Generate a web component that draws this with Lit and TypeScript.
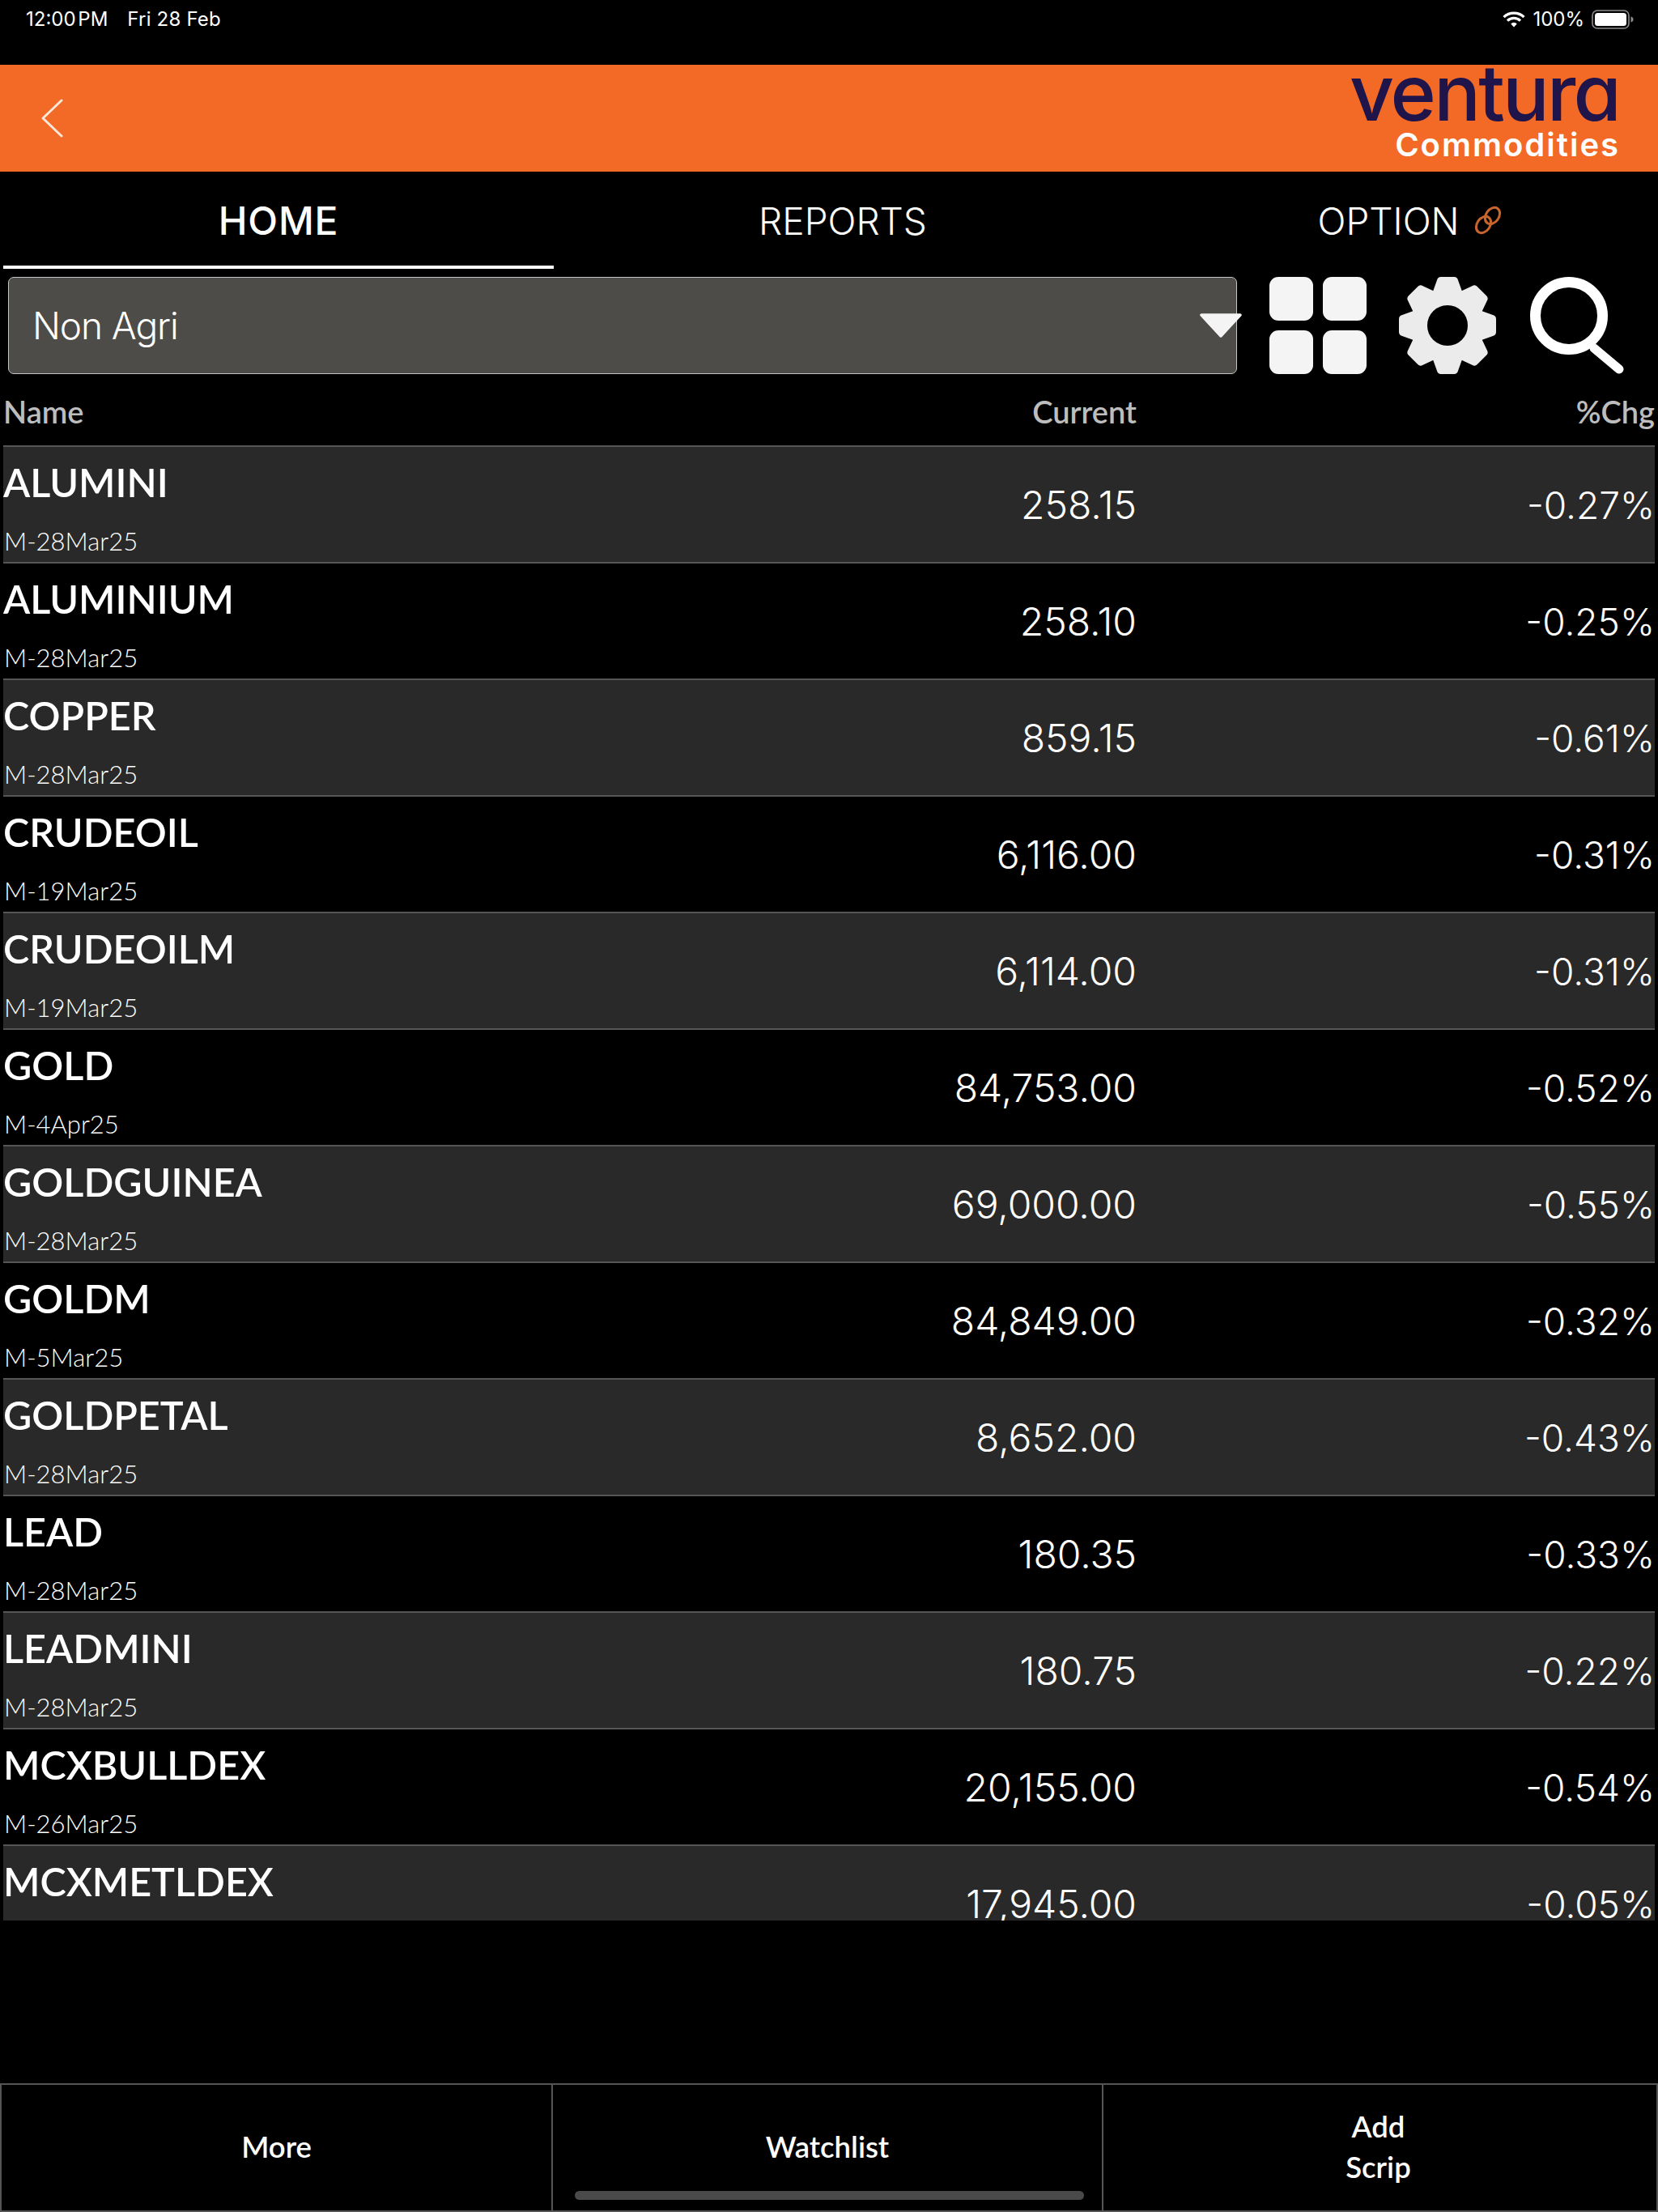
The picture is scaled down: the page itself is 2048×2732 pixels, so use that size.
import { LitElement, html, css, svg } from "lit";
import { customElement } from "lit/decorators.js";

const ROWS: [string, string, string, string][] = [
  ["ALUMINI", "M-28Mar25", "258.15", "-0.27%"],
  ["ALUMINIUM", "M-28Mar25", "258.10", "-0.25%"],
  ["COPPER", "M-28Mar25", "859.15", "-0.61%"],
  ["CRUDEOIL", "M-19Mar25", "6,116.00", "-0.31%"],
  ["CRUDEOILM", "M-19Mar25", "6,114.00", "-0.31%"],
  ["GOLD", "M-4Apr25", "84,753.00", "-0.52%"],
  ["GOLDGUINEA", "M-28Mar25", "69,000.00", "-0.55%"],
  ["GOLDM", "M-5Mar25", "84,849.00", "-0.32%"],
  ["GOLDPETAL", "M-28Mar25", "8,652.00", "-0.43%"],
  ["LEAD", "M-28Mar25", "180.35", "-0.33%"],
  ["LEADMINI", "M-28Mar25", "180.75", "-0.22%"],
  ["MCXBULLDEX", "M-26Mar25", "20,155.00", "-0.54%"],
  ["MCXMETLDEX", "", "17,945.00", "-0.05%"],
];

const TEETH = [0, 45, 90, 135, 180, 225, 270, 315];

@customElement("app-root")
export class AppRoot extends LitElement {
  static styles = css`
    :host {
      display: flex;
      flex-direction: column;
      width: 2048px;
      height: 2732px;
      background: #000;
      color: #fff;
      font-family: "Lato", "Liberation Sans", sans-serif;
      overflow: hidden;
    }
    svg { display: block; flex: none; }

    .status {
      height: 80px;
      flex: none;
      display: flex;
      align-items: flex-start;
      justify-content: space-between;
      padding: 10px 30px 0 32px;
      box-sizing: border-box;
      font-family: "Inter", "Liberation Sans", sans-serif;
      font-size: 24px;
      line-height: 28px;
    }
    .status-left { display: flex; gap: 24px; }
    .time { word-spacing: -4px; }
    .date { letter-spacing: 0.2px; }
    .status-right { display: flex; align-items: center; gap: 9px; }

    .brand {
      height: 132px;
      flex: none;
      background: #f26a25;
      display: flex;
      align-items: center;
      justify-content: space-between;
      padding: 0 48px 0 51px;
      box-sizing: border-box;
    }
    .logo {
      display: flex;
      flex-direction: column;
      align-items: flex-end;
      font-family: "Inter", "Liberation Sans", sans-serif;
    }
    .logo-main {
      color: #1f154b;
      font-size: 96px;
      font-weight: 500;
      line-height: 72px;
      letter-spacing: -2.8px;
      margin-top: -14px;
      font-feature-settings: "cv11";
    }
    .logo-sub {
      color: #fff;
      font-size: 40px;
      font-weight: 600;
      line-height: 44px;
      letter-spacing: 2px;
      margin: 7px -1px 0 0;
    }

    .tabs {
      height: 130px;
      flex: none;
      display: grid;
      grid-template-columns: 680px 714px 1fr;
      padding-left: 4px;
      box-sizing: border-box;
      font-family: "Inter", "Liberation Sans", sans-serif;
      font-size: 46px;
      font-weight: 300;
    }
    .tab {
      display: flex;
      align-items: flex-start;
      justify-content: center;
      gap: 18px;
      padding-top: 23px;
      line-height: 76px;
      box-sizing: border-box;
    }
    .tab.active {
      font-weight: 500;
      font-size: 48px;
      letter-spacing: 0.8px;
      padding-top: 23px;
      height: 120px;
      border-bottom: 4px solid #fff;
    }
    .tab.option { padding-left: 38px; }
    .tab.option svg { margin-top: 19px; }

    .tools {
      height: 120px;
      flex: none;
      display: flex;
      align-items: stretch;
      padding-left: 10px;
    }
    .select {
      position: relative;
      width: 1518px;
      box-sizing: border-box;
      background: #4d4c48;
      border: 1.5px solid #c4c4c4;
      border-radius: 7px;
      display: flex;
      align-items: center;
      padding-left: 29px;
      font-family: "Inter", "Liberation Sans", sans-serif;
      font-size: 46px;
      font-weight: 300;
      letter-spacing: -1.1px;
      margin-right: 40px;
    }
    .arrow { position: absolute; left: 1470px; top: 44px; }
    .gear { margin: 0 42px 0 40px; }

    .head, .row {
      display: grid;
      grid-template-columns: 1000px 400px 1fr;
    }
    .head {
      height: 88px;
      flex: none;
      box-sizing: border-box;
      margin: 0 4px;
      padding-top: 28px;
      color: #bdbdbd;
      font-size: 38px;
      font-weight: 600;
      line-height: 36px;
    }
    .head .r, .row .r { text-align: right; }

    .list {
      height: 1822px;
      flex: none;
      margin: 0 4px;
      overflow: hidden;
    }
    .row {
      height: 144px;
      box-sizing: border-box;
      border-top: 2px solid #555;
    }
    .row.alt { background: #292929; }
    .name {
      font-size: 48.5px;
      font-weight: 600;
      line-height: 56px;
      margin-top: 15px;
    }
    .sub {
      font-size: 31px;
      font-weight: 300;
      line-height: 38px;
      margin: 26px 0 0 1px;
    }
    .val {
      font-family: "Inter", "Liberation Sans", sans-serif;
      font-size: 48px;
      font-weight: 300;
      line-height: 144px;
    }
    .val.pct { font-size: 46px; }

    .spacer { flex: 1; }

    .bar {
      position: relative;
      height: 159px;
      flex: none;
      box-sizing: border-box;
      display: grid;
      grid-template-columns: 679px 680px 1fr;
      border: 2px solid #555;
      font-size: 36.5px;
      font-weight: 600;
      line-height: 50px;
    }
    .cell {
      display: flex;
      align-items: center;
      justify-content: center;
      text-align: center;
      padding-bottom: 4px;
      box-sizing: border-box;
    }
    .cell + .cell { border-left: 2px solid #555; }
    .cell.last { padding-right: 4px; }
    .home {
      position: absolute;
      left: 708px;
      top: 131px;
      width: 629px;
      height: 11px;
      border-radius: 6px;
      background: #4a4a4a;
    }
  `;

  private renderGear() {
    return html`<svg class="gear" width="120" height="120" viewBox="-60 -60 120 120" fill="#ebebeb">
      <circle r="35.5" fill="none" stroke="#ebebeb" stroke-width="21"></circle>
      ${TEETH.map(
        (a) => svg`<path transform="rotate(${a})" d="M-18-42-13-56Q-12-60-8-60H8Q12-60 13-56L18-42Z"></path>`
      )}
    </svg>`;
  }

  render() {
    return html`
      <div class="status">
        <div class="status-left"><span class="time">12:00 PM</span><span class="date">Fri 28 Feb</span></div>
        <div class="status-right">
          <svg width="28" height="20" viewBox="0 0 28 20" fill="none" stroke="#fff" stroke-width="3.2">
            <path d="M1.5 7.2a18 18 0 0 1 25 0"></path>
            <path d="M6 11.6a11.5 11.5 0 0 1 16 0"></path>
            <path d="M14 19.5 10.2 15.4a5.4 5.4 0 0 1 7.6 0Z" fill="#fff" stroke="none"></path>
          </svg>
          <span>100%</span>
          <svg width="52" height="24" viewBox="0 0 52 24">
            <rect x="1" y="1" width="45" height="22" rx="6" fill="none" stroke="#8c8c8c" stroke-width="1.6"></rect>
            <rect x="4" y="4" width="39" height="16" rx="3.5" fill="#fff"></rect>
            <path d="M48.5 8.5c2 .5 3 1.8 3 3.5s-1 3-3 3.5Z" fill="#8c8c8c"></path>
          </svg>
        </div>
      </div>

      <div class="brand">
        <svg width="27" height="48" viewBox="0 0 27 48" fill="none" stroke="#fbe6da" stroke-width="3" stroke-linecap="round" stroke-linejoin="round">
          <path d="M25 2 2 24 25 46"></path>
        </svg>
        <div class="logo">
          <span class="logo-main">ventura</span>
          <span class="logo-sub">Commodities</span>
        </div>
      </div>

      <div class="tabs">
        <div class="tab active">HOME</div>
        <div class="tab">REPORTS</div>
        <div class="tab option">
          <span>OPTION</span>
          <svg width="36" height="36" viewBox="0 0 36 36" fill="none" stroke="#c8652c" stroke-width="3">
            <ellipse cx="23.5" cy="12.5" rx="8" ry="11" transform="rotate(35 23.5 12.5)"></ellipse>
            <ellipse cx="12.5" cy="23.5" rx="8" ry="11" transform="rotate(35 12.5 23.5)"></ellipse>
          </svg>
        </div>
      </div>

      <div class="tools">
        <div class="select">
          Non Agri
          <svg class="arrow" width="54" height="31" viewBox="0 0 54 31">
            <path d="M3 2H51L27 28Z" fill="#f4f4f4" stroke="#f4f4f4" stroke-width="3.5" stroke-linejoin="round"></path>
          </svg>
        </div>
        <svg width="120" height="120" viewBox="0 0 120 120" fill="#f4f4f4">
          <rect width="54" height="54" rx="11"></rect>
          <rect x="66" width="54" height="54" rx="11"></rect>
          <rect y="66" width="54" height="54" rx="11"></rect>
          <rect x="66" y="66" width="54" height="54" rx="11"></rect>
        </svg>
        ${this.renderGear()}
        <svg width="116" height="120" viewBox="0 0 116 120" fill="none" stroke="#fff" stroke-width="13">
          <circle cx="48" cy="48" r="41.5"></circle>
          <path d="M79 88 110 114" stroke-width="11" stroke-linecap="round"></path>
        </svg>
      </div>

      <div class="head">
        <span>Name</span>
        <span class="r">Current</span>
        <span class="r">%Chg</span>
      </div>

      <div class="list">
        ${ROWS.map(
          (r, i) => html`<div class="row ${i % 2 === 0 ? "alt" : ""}">
            <div>
              <div class="name">${r[0]}</div>
              ${r[1] ? html`<div class="sub">${r[1]}</div>` : ""}
            </div>
            <div class="val r">${r[2]}</div>
            <div class="val pct r">${r[3]}</div>
          </div>`
        )}
      </div>

      <div class="spacer"></div>

      <div class="bar">
        <div class="cell">More</div>
        <div class="cell">Watchlist</div>
        <div class="cell last">Add<br />Scrip</div>
        <div class="home"></div>
      </div>
    `;
  }
}
